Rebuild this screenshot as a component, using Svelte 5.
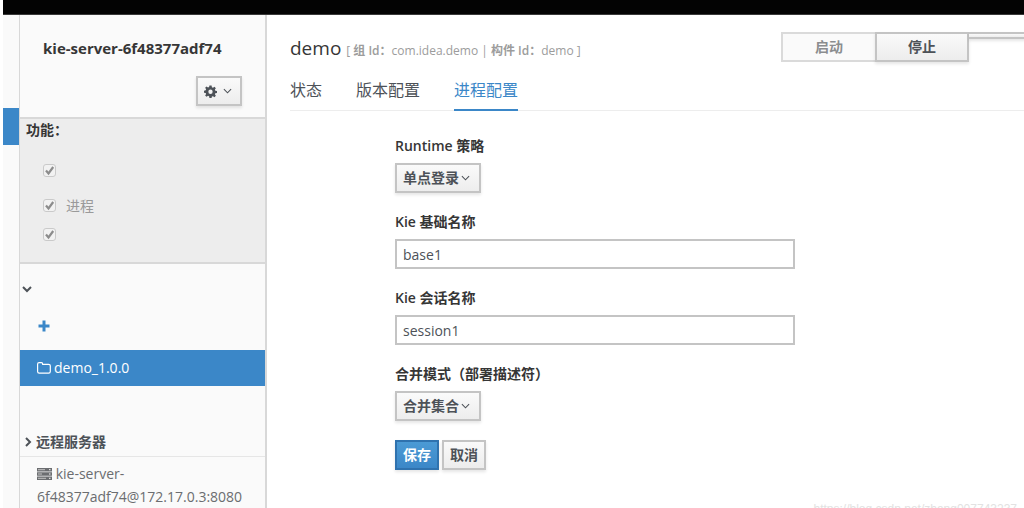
<script lang="ts">
  const features = $state([
    { id: 'rule', label: '', checked: true },
    { id: 'process', label: '进程', checked: true },
    { id: 'planning', label: '', checked: true },
  ])

  const tabs = ['状态', '版本配置', '进程配置']
  let activeTab = $state(2)

  const strategies = ['单点登录', '按请求', '按流程']
  const mergeModes = ['合并集合', '全部保留', '全部覆盖']

  let strategy = $state(strategies[0])
  let kbase = $state('base1')
  let ksession = $state('session1')
  let mergeMode = $state(mergeModes[0])

  function reset() {
    strategy = strategies[0]
    kbase = 'base1'
    ksession = 'session1'
    mergeMode = mergeModes[0]
  }
</script>

{#snippet chevron()}
  <svg class="chevron" viewBox="0 0 10 6" width="9" height="6" aria-hidden="true">
    <path d="M1 1l4 4 4-4" fill="none" stroke="currentColor" stroke-width="1.2" />
  </svg>
{/snippet}

<div class="page">
  <header class="masthead"></header>

  <div class="body">
    <nav class="rail" aria-label="导航"><a class="rail-item" href="#servers" aria-label="服务器"></a></nav>

    <aside class="sidebar">
      <div class="server-head">
        <h2>kie-server-6f48377adf74</h2>
        <button class="btn gear" aria-label="设置">
          <svg viewBox="0 0 24 24" width="13" height="13" aria-hidden="true">
            <path
              fill="currentColor"
              fill-rule="evenodd"
              d="M10 1h4l.6 3.200 2 .8 2.700-1.800 2.600 2.600L20.100 8.500l.8 2 3.100.5v3.600l-3.100.6-.8 2 1.800 2.600-2.600 2.600-2.700-1.800-2 .8L14 24h-4l-.6-3.200-2-.8-2.700 1.800-2.600-2.600 1.800-2.600-.8-2L0 14.100v-3.700l3.100-.5.8-2-1.800-2.600 2.600-2.600L7.400 4.500l2-.8zM12 8.500a4 4 0 1 0 0 8 4 4 0 0 0 0-8z"
            />
          </svg>
          {@render chevron()}
        </button>
      </div>

      <section class="features">
        <h3>功能：</h3>
        <ul>
          {#each features as f (f.id)}
            <li>
              <span class="check">
                <input id={f.id} type="checkbox" bind:checked={f.checked} disabled aria-label={f.label || f.id} />
                {#if f.checked}
                  <svg viewBox="0 0 13 13" width="13" height="13" aria-hidden="true">
                    <path d="M3 6.500l2.500 3L10.200 3" fill="none" stroke="currentColor" stroke-width="2.200" />
                  </svg>
                {/if}
              </span>
              {#if f.label}<label for={f.id}>{f.label}</label>{/if}
            </li>
          {/each}
        </ul>
      </section>

      <section class="containers">
        <button class="toggle" aria-label="部署单元">
          <svg viewBox="0 0 10 8" width="10" height="8" aria-hidden="true">
            <path d="M1 2l4 4 4-4" fill="none" stroke="currentColor" stroke-width="2" />
          </svg>
        </button>
        <button class="add" aria-label="添加">
          <svg viewBox="0 0 12 12" width="12" height="12" aria-hidden="true">
            <path d="M4.500 0.500h3v4h4v3h-4v4h-3v-4h-4v-3h4z" fill="currentColor" />
          </svg>
        </button>
        <a class="unit" href="#demo">
          <svg viewBox="0 0 14 12" width="14" height="12" aria-hidden="true">
            <path
              d="M.6 2.200Q.6.700 2.100.7h2.300q1.300 0 1.300 1.600h5.900q1.700 0 1.700 1.500v5.800q0 1.600-1.600 1.600H2.200Q.6 11.200.6 9.600z"
              fill="none" stroke="currentColor" stroke-width="1.200"
            />
          </svg>
          demo_1.0.0
        </a>
      </section>

      <section class="remotes">
        <h3>
          <svg viewBox="0 0 8 10" width="8" height="10" aria-hidden="true">
            <path d="M2 1l4 4-4 4" fill="none" stroke="currentColor" stroke-width="2" />
          </svg>
          远程服务器
        </h3>
        <a class="remote" href="#remote">
          <svg viewBox="0 0 15 12" width="15" height="12" aria-hidden="true">
            <path d="M0 0h15v3.400H0zM0 4.300h15v3.400H0zM0 8.600h15V12H0z" fill="currentColor" />
            <path d="M1 1.700h7M1 6h4M1 10.300h8" stroke="#c4c4c4" />
            <path d="M12 1.700h1.500M12 6h1.500M12 10.300h1.500" stroke="#fafafa" />
          </svg>
          kie-server-<wbr />6f48377adf74@172.17.0.3:8080
        </a>
      </section>
    </aside>

    <main>
      <div class="title-row">
        <h1>
          demo
          <small>[ <b>组 Id：</b>com.idea.demo | <b>构件 Id：</b>demo ]</small>
        </h1>
        <div class="actions">
          <button class="btn wide" disabled>启动</button>
          <button class="btn wide">停止</button>
          <button class="btn stub" aria-label="更多"></button>
        </div>
      </div>

      <div class="tabs" role="tablist">
        {#each tabs as tab, i}
          <button role="tab" class:active={i === activeTab} aria-selected={i === activeTab} onclick={() => (activeTab = i)}>{tab}</button>
        {/each}
      </div>

      <form onsubmit={e => e.preventDefault()}>
        <div class="field">
          <label for="strategy">Runtime 策略</label>
          <div class="select">
            <select id="strategy" class="btn" bind:value={strategy}>
              {#each strategies as s}<option>{s}</option>{/each}
            </select>
            {@render chevron()}
          </div>
        </div>
        <div class="field">
          <label for="kbase">Kie 基础名称</label>
          <input id="kbase" type="text" bind:value={kbase} />
        </div>
        <div class="field">
          <label for="ksession">Kie 会话名称</label>
          <input id="ksession" type="text" bind:value={ksession} />
        </div>
        <div class="field">
          <label for="merge">合并模式（部署描述符）</label>
          <div class="select">
            <select id="merge" class="btn" bind:value={mergeMode}>
              {#each mergeModes as m}<option>{m}</option>{/each}
            </select>
            {@render chevron()}
          </div>
        </div>
        <div class="buttons">
          <button class="btn primary" type="submit">保存</button>
          <button class="btn" type="button" onclick={reset}>取消</button>
        </div>
      </form>
    </main>
  </div>
  <span class="watermark">https://blog.csdn.net/zhang007743237</span>
</div>

<style>
  :global(body) {
    background: #fff;
  }
  .page {
    position: relative;
    display: flex;
    flex-direction: column;
    height: 100vh;
    padding-left: 3px;
    box-sizing: border-box;
    overflow: hidden;
    font-family: "Open Sans", "Noto Sans CJK SC", sans-serif;
    font-size: 14px;
    line-height: 20px;
    color: #4d5258;
  }
  .page * {
    box-sizing: border-box;
  }
  h1, h2, h3, ul {
    margin: 0;
    padding: 0;
    font-size: 14px;
    font-weight: 600;
  }
  button, input, select {
    font: inherit;
    color: inherit;
    border-radius: 0;
    margin: 0;
  }
  button, select {
    cursor: pointer;
  }
  svg {
    flex: none;
  }
  a {
    text-decoration: none;
    color: inherit;
  }
  .masthead {
    flex: none;
    height: 15px;
    background: #030303;
    border-bottom: 1px solid #393939;
  }
  .body {
    flex: 1;
    min-height: 0;
    display: flex;
  }
  .rail {
    flex: none;
    width: 16px;
    padding-top: 93px;
    background: #fafafa;
  }
  .rail-item {
    display: block;
    height: 37px;
    background: #3b87c8;
  }
  .sidebar {
    flex: none;
    width: 248px;
    background: #fafafa;
    border: solid #d8d8d8;
    border-width: 0 2px 0 1px;
  }

  .btn {
    height: 30px;
    padding: 0 6px;
    border: 2px solid #c4c4c4;
    background: linear-gradient(#fafafa, #ededed);
    box-shadow: 0 2px 3px rgba(3, 3, 3, 0.1);
    font-weight: 600;
    line-height: 20px;
    white-space: nowrap;
  }
  .btn:disabled {
    background: #fafafa;
    border-color: #dadada;
    box-shadow: none;
    color: #8b8d8f;
  }
  .btn.primary {
    background: linear-gradient(#4b9ad5, #3b87c8);
    border-color: #2f72ae;
    color: #fff;
  }

  .server-head {
    display: flex;
    flex-direction: column;
    height: 104px;
    padding: 21px 23px 0;
    border-bottom: 2px solid #d8d8d8;
  }
  .server-head h2 {
    font-size: 15px;
    font-weight: 700;
    line-height: 24px;
    color: #363636;
  }
  .gear {
    display: flex;
    align-items: center;
    justify-content: space-between;
    align-self: flex-end;
    width: 46px;
    margin-top: 16px;
    padding: 0 8px 0 6px;
  }

  .features {
    height: 145px;
    padding: 1px 6px;
    background: #ededed;
    border-bottom: 2px solid #d8d8d8;
  }
  .features h3 {
    color: #363636;
  }
  .features ul {
    display: flex;
    flex-direction: column;
    padding: 16px 17px;
    list-style: none;
  }
  .features li {
    display: flex;
    align-items: center;
    gap: 10px;
    height: 29px;
    font-weight: 400;
    color: #9a9a9a;
  }
  .features li:first-child {
    margin-bottom: 6px;
  }
  .check {
    display: grid;
  }
  .check input, .check svg {
    grid-area: 1 / 1;
  }
  .check svg {
    color: #8c8c8c;
    pointer-events: none;
  }
  .features input {
    appearance: none;
    width: 13px;
    height: 13px;
    border: 1px solid #cacaca;
    border-radius: 3px;
    background: #f2f2f2;
  }

  .containers {
    display: flex;
    flex-direction: column;
    align-items: flex-start;
    height: 163px;
    padding-top: 15px;
  }
  .toggle, .add {
    display: flex;
    align-items: center;
    height: 20px;
    padding: 0 2px;
    border: none;
    background: none;
  }
  .add {
    margin: 17px 16px 14px;
    color: #3b87c8;
  }
  .unit {
    display: flex;
    align-items: center;
    gap: 3px;
    align-self: stretch;
    height: 36px;
    padding: 0 17px;
    background: #3b87c8;
    color: #fff;
  }

  .remotes h3 {
    display: flex;
    align-items: center;
    gap: 4px;
    height: 30px;
    padding: 0 4px;
    border-bottom: 1px solid #e6e6e6;
  }
  .remote {
    display: block;
    padding: 5px 17px;
    line-height: 23px;
    color: #6b6d70;
  }
  .remote svg {
    vertical-align: -1px;
  }

  main {
    flex: 1;
    min-width: 0;
    padding-left: 23px;
    background: #fff;
  }
  .title-row {
    display: flex;
    justify-content: space-between;
    height: 60px;
    padding-top: 17px;
  }
  h1 {
    font-size: 19px;
    font-weight: 400;
    line-height: 32px;
    color: #363636;
    white-space: nowrap;
  }
  h1 small {
    font-size: 12px;
    color: #9c9c9c;
  }
  h1 b {
    font-weight: 600;
  }
  .actions {
    display: flex;
    align-items: flex-start;
  }
  .wide {
    width: 94px;
  }
  .wide:disabled {
    border-right: none;
  }
  .stub {
    width: 57px;
    height: 7px;
    margin-right: -2px;
    border-left: none;
  }

  .tabs {
    display: flex;
    gap: 34px;
    height: 36px;
    border-bottom: 1px solid #ededed;
  }
  .tabs button {
    height: 36px;
    padding: 0 0 4px;
    border: none;
    border-bottom: 2px solid transparent;
    background: none;
    font-size: 16px;
    line-height: 26px;
  }
  .tabs .active {
    color: #3b87c8;
    border-color: #3b87c8;
  }

  form {
    display: flex;
    flex-direction: column;
    padding: 25px 24px 0 105px;
  }
  .field {
    display: flex;
    flex-direction: column;
    align-items: flex-start;
    gap: 7px;
    margin-bottom: 19px;
  }
  .field label {
    font-weight: 600;
    color: #363636;
  }
  .field input {
    width: 100%;
    max-width: 400px;
    height: 30px;
    padding: 0 6px;
    border: 2px solid #c4c4c4;
    background: #fff;
  }
  .select {
    display: grid;
    align-items: center;
  }
  .select select, .select :global(.chevron) {
    grid-area: 1 / 1;
  }
  .select select {
    appearance: none;
    width: 86px;
  }
  .select :global(.chevron) {
    justify-self: end;
    margin-right: 11px;
    pointer-events: none;
  }
  .buttons {
    display: flex;
    gap: 3px;
  }
  .buttons .btn {
    width: 44px;
  }

  .watermark {
    position: absolute;
    right: 7px;
    bottom: -9px;
    font: 12px/16px "Liberation Sans", sans-serif;
    color: #e2e2e2;
  }
</style>
